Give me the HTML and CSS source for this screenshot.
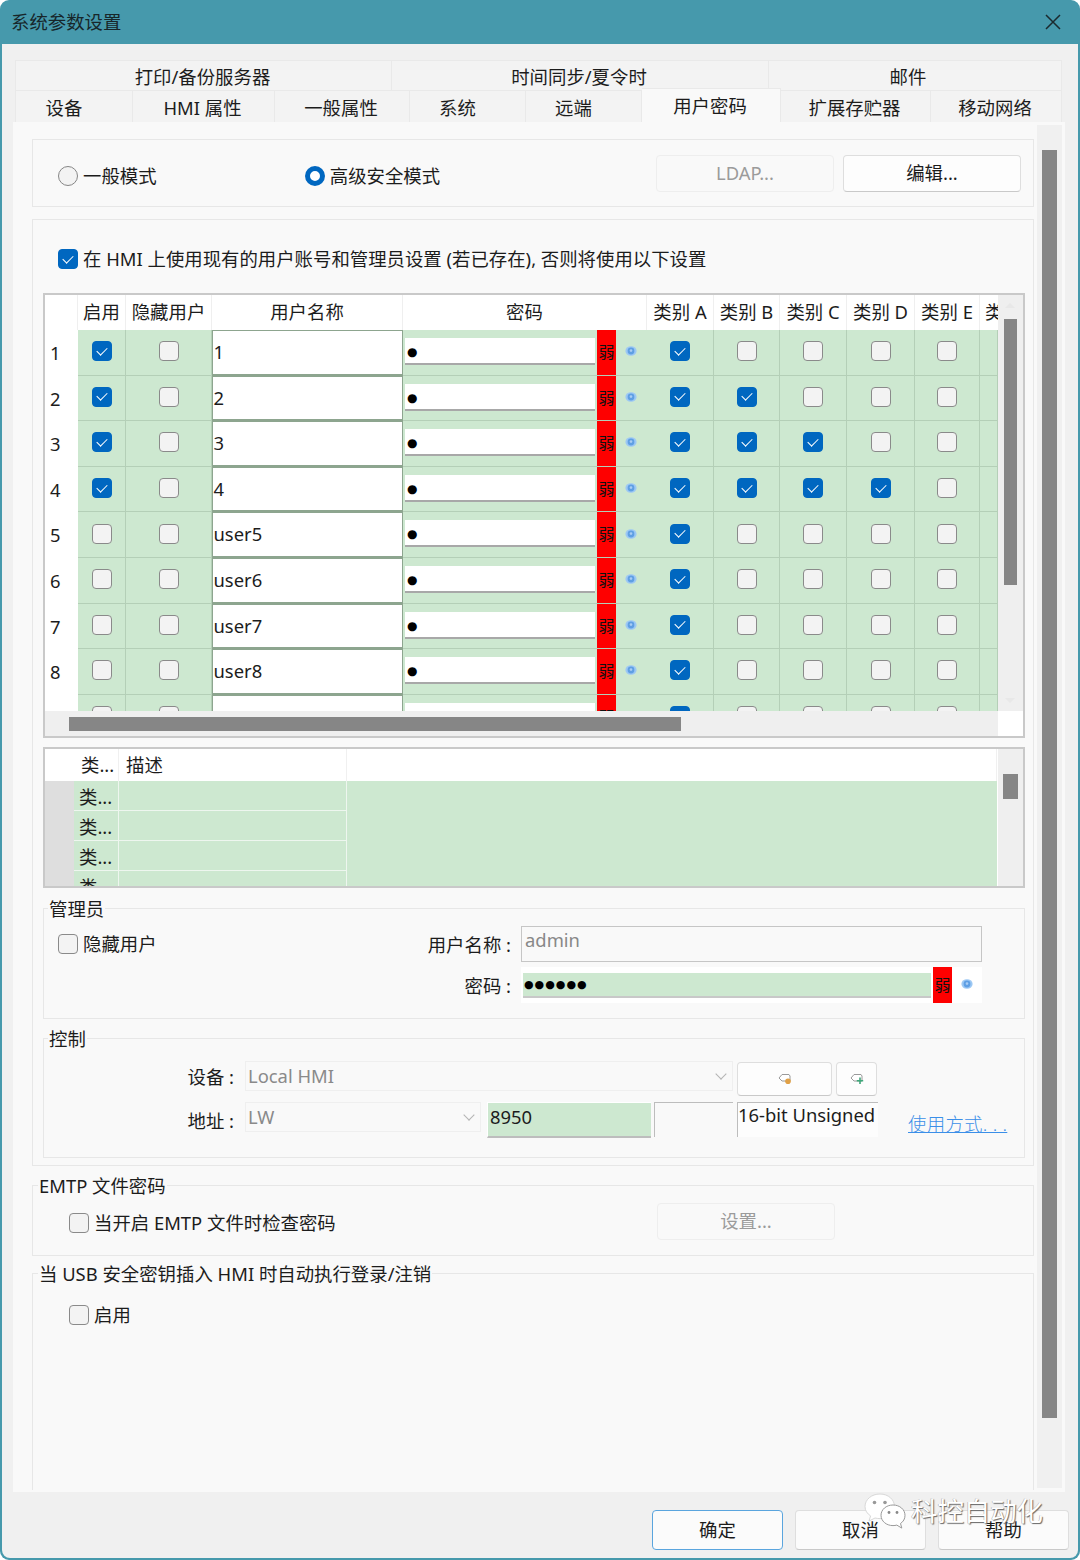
FILE: index.html
```html
<!DOCTYPE html>
<html lang="zh-CN">
<head>
<meta charset="utf-8">
<title>系统参数设置</title>
<link rel="stylesheet" href="styles.css">
</head>
<body>
<svg class="defs" width="0" height="0" aria-hidden="true">
  <symbol id="eye" viewBox="0 0 12 12">
    <ellipse cx="6" cy="6" rx="5.6" ry="4.8" fill="#9cc8f4"/>
    <circle cx="6" cy="6" r="3.4" fill="#5f9fe4"/>
    <circle cx="6" cy="5.6" r="1.3" fill="#a9cdf4"/>
  </symbol>
</svg>
<div class="window">
  <header class="titlebar">
    <span class="title">系统参数设置</span>
    <svg class="close" width="16" height="16" viewBox="0 0 16 16"><path d="M1 1L15 15M15 1L1 15" stroke="#1b2a2e" stroke-width="1.5" fill="none"/></svg>
  </header>
  <div class="client">
    <div class="tabs tabs-top">
      <div class="tab">打印/备份服务器</div>
      <div class="tab">时间同步/夏令时</div>
      <div class="tab tab-mail">邮件</div>
    </div>
    <div class="tabs tabs-bottom">
      <div class="tab tab-left">设备</div>
      <div class="tab">HMI 属性</div>
      <div class="tab">一般属性</div>
      <div class="tab tab-left">系统</div>
      <div class="tab tab-left">远端</div>
      <div class="tab active">用户密码</div>
      <div class="tab">扩展存贮器</div>
      <div class="tab">移动网络</div>
    </div>
    <main class="panel">
      <div class="scroll-area">
        <section class="group mode-group">
          <label class="opt mode-opt"><span class="radio"></span>一般模式</label>
          <label class="opt mode-opt"><span class="radio on"></span>高级安全模式</label>
          <button class="btn wide disabled">LDAP...</button>
          <button class="btn wide">编辑...</button>
        </section>

        <section class="group security-group">
          <label class="opt use-existing"><span class="cb on"></span>在 HMI 上使用现有的用户账号和管理员设置 (若已存在), 否则将使用以下设置</label>

          <div class="users">
            <div class="users-view">
              <div class="users-table">
                <div class="th"></div><div class="th">启用</div><div class="th">隐藏用户</div><div class="th">用户名称</div><div class="th">密码</div><div class="th">类别 A</div><div class="th">类别 B</div><div class="th">类别 C</div><div class="th">类别 D</div><div class="th">类别 E</div><div class="th th-clip">类别 F</div>

                <div class="rowhead">1</div><div class="td"><span class="cb on"></span></div><div class="td"><span class="cb"></span></div><div class="uname">1</div><div class="pw"><span class="pw-in">●</span><span class="weak">弱</span><span class="eye-box"><svg class="eye"><use href="#eye"/></svg></span></div><div class="td"><span class="cb on"></span></div><div class="td"><span class="cb"></span></div><div class="td"><span class="cb"></span></div><div class="td"><span class="cb"></span></div><div class="td"><span class="cb"></span></div><div class="td"></div>

                <div class="rowhead">2</div><div class="td"><span class="cb on"></span></div><div class="td"><span class="cb"></span></div><div class="uname">2</div><div class="pw"><span class="pw-in">●</span><span class="weak">弱</span><span class="eye-box"><svg class="eye"><use href="#eye"/></svg></span></div><div class="td"><span class="cb on"></span></div><div class="td"><span class="cb on"></span></div><div class="td"><span class="cb"></span></div><div class="td"><span class="cb"></span></div><div class="td"><span class="cb"></span></div><div class="td"></div>

                <div class="rowhead">3</div><div class="td"><span class="cb on"></span></div><div class="td"><span class="cb"></span></div><div class="uname">3</div><div class="pw"><span class="pw-in">●</span><span class="weak">弱</span><span class="eye-box"><svg class="eye"><use href="#eye"/></svg></span></div><div class="td"><span class="cb on"></span></div><div class="td"><span class="cb on"></span></div><div class="td"><span class="cb on"></span></div><div class="td"><span class="cb"></span></div><div class="td"><span class="cb"></span></div><div class="td"></div>

                <div class="rowhead">4</div><div class="td"><span class="cb on"></span></div><div class="td"><span class="cb"></span></div><div class="uname">4</div><div class="pw"><span class="pw-in">●</span><span class="weak">弱</span><span class="eye-box"><svg class="eye"><use href="#eye"/></svg></span></div><div class="td"><span class="cb on"></span></div><div class="td"><span class="cb on"></span></div><div class="td"><span class="cb on"></span></div><div class="td"><span class="cb on"></span></div><div class="td"><span class="cb"></span></div><div class="td"></div>

                <div class="rowhead">5</div><div class="td"><span class="cb"></span></div><div class="td"><span class="cb"></span></div><div class="uname">user5</div><div class="pw"><span class="pw-in">●</span><span class="weak">弱</span><span class="eye-box"><svg class="eye"><use href="#eye"/></svg></span></div><div class="td"><span class="cb on"></span></div><div class="td"><span class="cb"></span></div><div class="td"><span class="cb"></span></div><div class="td"><span class="cb"></span></div><div class="td"><span class="cb"></span></div><div class="td"></div>

                <div class="rowhead">6</div><div class="td"><span class="cb"></span></div><div class="td"><span class="cb"></span></div><div class="uname">user6</div><div class="pw"><span class="pw-in">●</span><span class="weak">弱</span><span class="eye-box"><svg class="eye"><use href="#eye"/></svg></span></div><div class="td"><span class="cb on"></span></div><div class="td"><span class="cb"></span></div><div class="td"><span class="cb"></span></div><div class="td"><span class="cb"></span></div><div class="td"><span class="cb"></span></div><div class="td"></div>

                <div class="rowhead">7</div><div class="td"><span class="cb"></span></div><div class="td"><span class="cb"></span></div><div class="uname">user7</div><div class="pw"><span class="pw-in">●</span><span class="weak">弱</span><span class="eye-box"><svg class="eye"><use href="#eye"/></svg></span></div><div class="td"><span class="cb on"></span></div><div class="td"><span class="cb"></span></div><div class="td"><span class="cb"></span></div><div class="td"><span class="cb"></span></div><div class="td"><span class="cb"></span></div><div class="td"></div>

                <div class="rowhead">8</div><div class="td"><span class="cb"></span></div><div class="td"><span class="cb"></span></div><div class="uname">user8</div><div class="pw"><span class="pw-in">●</span><span class="weak">弱</span><span class="eye-box"><svg class="eye"><use href="#eye"/></svg></span></div><div class="td"><span class="cb on"></span></div><div class="td"><span class="cb"></span></div><div class="td"><span class="cb"></span></div><div class="td"><span class="cb"></span></div><div class="td"><span class="cb"></span></div><div class="td"></div>

                <div class="rowhead">9</div><div class="td"><span class="cb"></span></div><div class="td"><span class="cb"></span></div><div class="uname">user9</div><div class="pw"><span class="pw-in">●</span><span class="weak">弱</span><span class="eye-box"><svg class="eye"><use href="#eye"/></svg></span></div><div class="td"><span class="cb on"></span></div><div class="td"><span class="cb"></span></div><div class="td"><span class="cb"></span></div><div class="td"><span class="cb"></span></div><div class="td"><span class="cb"></span></div><div class="td"></div>
              </div>
            </div>
            <div class="vbar"><span class="arrow up"></span><span class="thumb v-thumb"></span><span class="arrow down"></span></div>
            <div class="hbar"><span class="thumb h-thumb"></span></div>
            <div class="corner"></div>
          </div>

          <div class="cats">
            <div class="cats-view">
              <div class="cats-table">
                <div class="ch ch-gut"></div><div class="ch ch-cat">类...</div><div class="ch ch-desc">描述</div><div class="ch"></div>
                <div class="gut"></div><div class="cc">类...</div><div class="cd"></div><div class="ce"></div>
                <div class="gut"></div><div class="cc">类...</div><div class="cd"></div><div class="ce"></div>
                <div class="gut"></div><div class="cc">类...</div><div class="cd"></div><div class="ce"></div>
                <div class="gut"></div><div class="cc">类...</div><div class="cd"></div><div class="ce"></div>
              </div>
            </div>
            <div class="vbar cats-bar"><span class="thumb c-thumb"></span></div>
          </div>

          <fieldset class="group admin">
            <span class="legend">管理员</span>
            <label class="opt admin-hide"><span class="cb"></span>隐藏用户</label>
            <span class="flabel">用户名称 :</span>
            <div class="name-field">admin</div>
            <span class="flabel admin-pass-label">密码 :</span>
            <div class="pass-field"><span class="pass-in">●●●●●●</span><span class="weak">弱</span><span class="eye-box"><svg class="eye"><use href="#eye"/></svg></span></div>
          </fieldset>

          <fieldset class="group control">
            <span class="legend">控制</span>
            <div class="ctl-row ctl-row1">
              <span class="flabel ctl-label">设备 :</span>
              <div class="select sel-device">Local HMI<span class="chev"></span></div>
              <button class="btn icon-btn ib-wide"><svg width="14" height="12" viewBox="0 0 14 12"><path d="M1 5L4 1.5H11L12 3V8H4Z" fill="#fff" stroke="#9a9a9a"/><circle cx="10" cy="8.2" r="2.8" fill="#e0a045"/></svg></button>
              <button class="btn icon-btn ib-small"><svg width="14" height="12" viewBox="0 0 14 12"><path d="M1 5L4 1.5H11L12 3V8H4Z" fill="#fff" stroke="#9a9a9a"/><path d="M10 4.5V11M6.8 7.8H13.2" stroke="#3fa77a" stroke-width="1.6"/></svg></button>
            </div>
            <div class="ctl-row ctl-row2">
              <span class="flabel ctl-label ctl-label2">地址 :</span>
              <div class="select sel-lw">LW<span class="chev"></span></div>
              <div class="addr">8950</div>
              <div class="blank"></div>
              <div class="dtype">16-bit Unsigned</div>
              <a class="howto">使用方式. . .</a>
            </div>
          </fieldset>
        </section>

        <fieldset class="group emtp">
          <span class="legend legend-outer">EMTP 文件密码</span>
          <label class="opt"><span class="cb"></span>当开启 EMTP 文件时检查密码</label>
          <button class="btn wide disabled">设置...</button>
        </fieldset>

        <fieldset class="group usb">
          <span class="legend legend-outer">当 USB 安全密钥插入 HMI 时自动执行登录/注销</span>
          <label class="opt"><span class="cb"></span>启用</label>
        </fieldset>
      </div>
      <div class="panel-bar"><span class="thumb p-thumb"></span></div>
    </main>
    <footer class="actions">
      <button class="btn act primary">确定</button>
      <button class="btn act">取消</button>
      <button class="btn act">帮助</button>
    </footer>
    <div class="watermark">
      <svg class="wx" width="42" height="38" viewBox="0 0 42 38">
        <path d="M16 1C7.500 1 1 6.600 1 13.500c0 4 2.200 7.200 5.600 9.400L5 28l6-3c1.600.4 3.200.6 5 .6 8.500 0 14.500-5.400 14.500-12.100S24.500 1 16 1Z" fill="#fff" stroke="#d8d8d8"/>
        <path d="M29 12c-6.800 0-12 4.600-12 10.300S22.200 32.600 29 32.600c1.400 0 2.600-.2 3.800-.5l5 3-1.300-4.600c2.900-1.900 4.500-4.700 4.500-8.200C41 16.600 35.800 12 29 12Z" fill="#fff" stroke="#9a9a9a"/>
        <circle cx="10.500" cy="9.500" r="1.800" fill="#999"/><circle cx="21" cy="9.500" r="1.800" fill="#999"/>
        <circle cx="25" cy="19.500" r="1.400" fill="#888"/><circle cx="33" cy="19.500" r="1.400" fill="#888"/>
      </svg>
      <span class="wm-text">科控自动化</span>
    </div>
  </div>
</div>
</body>
</html>
```

FILE: styles.css
```css
* { box-sizing: border-box; }
html, body { margin: 0; padding: 0; background: #fff; }
body {
  width: 1080px;
  height: 1560px;
  overflow: hidden;
  font-family: "Noto Sans", "Noto Sans CJK SC", sans-serif;
  font-size: 18.4px;
  line-height: 24px;
  color: #1c1c1c;
}
.defs { position: absolute; }
button { font: inherit; color: inherit; padding: 0; }
fieldset { margin: 0; min-width: 0; }

.window {
  width: 1080px;
  height: 1560px;
  display: flex;
  flex-direction: column;
  background: #4699ac;
  border-radius: 9px;
  overflow: hidden;
}
.titlebar {
  height: 44px;
  flex: none;
  display: flex;
  align-items: center;
  justify-content: space-between;
  padding: 0 19px 0 11px;
  color: #17262a;
}
.client {
  position: relative;
  flex: 1;
  margin: 0 2px 2px;
  background: #f0f0f0;
  border-radius: 0 0 8px 8px;
  padding: 16px 0 0 13px;
  display: flex;
  flex-direction: column;
}
.tabs { display: grid; width: 1047px; }
.tabs-top { grid-template-columns: 377px 377px 293px; height: 30px; }
.tabs-bottom { grid-template-columns: 118px 142px 135px 116px 116px 139px 150px 131px; height: 32px; }
.tab {
  display: flex;
  align-items: center;
  justify-content: center;
  background: #f3f3f3;
  border: 1px solid #e9e9e9;
  border-width: 1px 1px 0 0;
  white-space: nowrap;
  padding: 3px 2px 0 0;
}
.tab:first-child { border-left-width: 1px; }
.tab.tab-left { padding-right: 20px; }
.tab.tab-mail { padding-right: 14px; }
.tab.active {
  background: #f9f9f9;
  margin-top: -2px;
  padding-top: 0;
  position: relative;
  z-index: 1;
}

.panel {
  margin-left: -2px;
  width: 1052px;
  height: 1370px;
  flex: none;
  background: #f9f9f9;
  display: flex;
}
.scroll-area {
  width: 1021px;
  padding: 17px 0 0 19px;
  flex: none;
  display: flex;
  flex-direction: column;
}
.panel-bar {
  margin: 3px 0 4px 3px;
  width: 25px;
  background: #f0f0f0;
  padding: 25px 5px 0;
}
.thumb { display: block; background: #868686; }
.p-thumb { height: 1268px; }

.group {
  width: 1002px;
  border: 1.5px solid #e7e7e7;
  padding: 0;
  position: relative;
  flex: none;
}
.legend {
  position: absolute;
  left: 4px;
  top: -12px;
  background: #f9f9f9;
  padding: 0 1px;
  white-space: nowrap;
}
.legend-outer { left: 5px; }

.opt { display: inline-flex; align-items: center; gap: 5px; white-space: nowrap; }
.radio {
  width: 20px; height: 20px; flex: none;
  border-radius: 50%;
  border: 1.5px solid #868686;
  background: #f3f3f3;
}
.radio.on { border: 5.500px solid #0067c0; background: #fff; }
.cb {
  position: relative;
  display: block;
  width: 20px; height: 20px; flex: none;
  border-radius: 4px;
  border: 1.5px solid #8a8a8a;
  background: #f3f3f3;
}
.cb.on { background: #0067c0; border-color: #0067c0; }
.cb.on::after {
  content: "";
  position: absolute;
  left: 6px; top: 2.500px;
  width: 5px; height: 9px;
  border: solid #fff;
  border-width: 0 1.2px 1.2px 0;
  transform: rotate(45deg);
}

.btn {
  display: flex;
  align-items: center;
  justify-content: center;
  background: #fdfdfd;
  border: 1px solid #dedede;
  border-bottom: 1.5px solid #c9c9c9;
  border-radius: 4px;
  flex: none;
}
.btn.disabled { background: #f9f9f9; color: #9b9b9b; border: 1px solid #eee; }
.wide { width: 178px; height: 37px; padding-bottom: 1px; }

.mode-group {
  height: 68px;
  display: flex;
  align-items: flex-start;
  padding: 15px 12px 0 25px;
  gap: 0;
}
.mode-opt { margin-top: 9px; width: 248px; }
.mode-opt + .mode-opt { width: 353px; }
.mode-group .btn + .btn { margin-left: 9px; }

.security-group {
  height: 947px;
  margin-top: 12px;
  padding: 27px 0 0 10px;
  display: flex;
  flex-direction: column;
}
.use-existing { margin-left: 15px; height: 24px; }

.users {
  margin-top: 22px;
  width: 982px;
  height: 445px;
  border: 2px solid #c9c9c9;
  display: grid;
  grid-template-columns: 953px 25px;
  grid-template-rows: 416px 25px;
  background: #fff;
}
.users-view { overflow: hidden; }
.users-table {
  display: grid;
  grid-template-columns: 33px 48px 86px 191px 244px 67px 66px 67px 68px 65px 18px;
  grid-template-rows: 35px repeat(9, 45.6px);
}
.th {
  display: flex;
  align-items: center;
  justify-content: center;
  background: #fff;
  border-right: 1.5px solid #efefef;
  white-space: nowrap;
  overflow: hidden;
  padding-bottom: 2px;
}
.th-clip { justify-content: flex-start; padding-left: 5px; border-right: 0; }
.rowhead { background: #fff; padding: 11px 0 0 5px; }
.td {
  display: flex;
  align-items: center;
  justify-content: center;
  background: #cde8d0;
  border-right: 1.5px solid #b4cfb7;
  border-bottom: 1.5px solid #b4cfb7;
}
.td .cb { margin-top: -2px; }
.uname {
  background: #fff;
  border: 1.5px solid #8da58f;
  border-bottom-width: 2px;
  padding: 9px 0 0 0.5px;
  line-height: 24px;
  overflow: hidden;
}
.pw {
  display: flex;
  background: #cde8d0;
  border-bottom: 1.5px solid #b4cfb7;
  padding-left: 2px;
  overflow: hidden;
}
.pw-in {
  width: 190px;
  height: 27px;
  margin-top: 8px;
  background: #fff;
  border-bottom: 2px solid #a8a8a8;
  padding-left: 2px;
  font-size: 12px;
  line-height: 28px;
  color: #000;
  font-family: "DejaVu Sans", sans-serif;
}
.weak {
  width: 19px;
  flex: none;
  margin-left: 2px;
  background: #fe0000;
  color: #111;
  font-size: 16px;
  line-height: 44px;
  text-align: center;
}
.eye-box { width: 30px; flex: none; display: flex; align-items: center; justify-content: center; }
.eye { width: 12px; height: 12px; margin-top: -2px; }

.vbar { background: #efefef; padding: 24px 6px 0; position: relative; }
.v-thumb { height: 266px; }
.arrow { position: absolute; left: 7px; width: 0; height: 0; border: 5px solid transparent; }
.arrow.up { top: 3px; border-bottom-color: #e8e8e8; }
.arrow.down { bottom: 3px; border-top-color: #e8e8e8; }
.hbar { background: #efefef; padding: 6px 0 0 24px; }
.h-thumb { width: 612px; height: 14px; }
.corner { background: #fff; }

.cats {
  margin-top: 9px;
  width: 982px;
  height: 141px;
  border: 2px solid #c9c9c9;
  display: grid;
  grid-template-columns: 953px 25px;
  background: #fff;
}
.cats-view { overflow: hidden; height: 137px; }
.cats-table {
  display: grid;
  grid-template-columns: 29px 45px 228px 650px;
  grid-template-rows: 32px repeat(4, 30px);
}
.ch { background: #fff; border-right: 1.5px solid #f0f0f0; display: flex; align-items: center; white-space: nowrap; }
.ch-gut { border-right: 0; }
.ch-cat { padding-left: 7px; }
.ch-desc { padding-left: 7px; }
.gut { background: #dedede; }
.cc { background: #cde8d0; border-right: 1.5px solid #eef6ef; border-bottom: 1.5px solid #eef6ef; padding: 4px 0 0 5px; overflow: hidden; }
.cd { background: #cde8d0; border-right: 1.5px solid #eef6ef; border-bottom: 1.5px solid #eef6ef; }
.ce { background: #cde8d0; }
.cats-bar { padding: 25px 5px 0 5px; }
.c-thumb { height: 25px; }

.admin {
  width: 982px;
  height: 111px;
  margin-top: 20px;
  display: grid;
  grid-template-columns: 1fr auto 461px;
  grid-template-rows: 36px 36px;
  column-gap: 9px;
  row-gap: 5px;
  padding: 17px 42px 0 14px;
}
.admin-hide { align-self: start; margin-top: 6px; }
.flabel { white-space: nowrap; }
.admin > .flabel { align-self: center; justify-self: end; margin: 2px 1px 0 0; }
.admin-pass-label { grid-column: 2; grid-row: 2; }
.name-field {
  border: 1.5px solid #c6c6c6;
  color: #888;
  padding: 1px 0 0 3px;
}
.pass-field {
  grid-column: 3;
  display: flex;
  background: #fff;
}
.pass-in {
  flex: 1;
  margin: 6px 0 5px 2px;
  padding-left: 1px;
  background: #cde8d0;
  border-bottom: 2px solid #c8c8c8;
  font-family: "DejaVu Sans", sans-serif;
  font-size: 11px;
  line-height: 24px;
  letter-spacing: 1px;
  color: #000;
}
.pass-field .weak { line-height: 36px; }
.pass-field .eye-box { width: 30px; }

.control {
  width: 982px;
  height: 120px;
  margin-top: 19px;
  padding: 22px 0 0 0;
}
.ctl-row { display: flex; align-items: flex-start; }
.ctl-row1 { height: 41px; }
.ctl-label { width: 190px; text-align: right; margin-right: 11px; flex: none; margin-top: 4px; }
.ctl-label2 { margin-top: 7px; }
.select {
  position: relative;
  height: 30px;
  border: 1.5px solid #efefef;
  color: #8a8a8a;
  padding: 2px 0 0 2px;
  flex: none;
}
.sel-device { width: 488px; }
.sel-lw { width: 236px; }
.chev {
  position: absolute;
  right: 7px; top: 8px;
  width: 8px; height: 8px;
  border: solid #b4b4b4;
  border-width: 0 1px 1px 0;
  transform: rotate(45deg);
}
.icon-btn { height: 34px; margin-top: 1px; }
.ib-wide { width: 95px; margin-left: 4px; }
.ib-small { width: 41px; margin-left: 4px; }
.addr {
  width: 164px;
  height: 36px;
  margin-left: 6px;
  background: #cde8d0;
  border: solid #fff;
  border-width: 1.5px 0 0 1.5px;
  border-bottom: 2px solid #bdbdbd;
  padding: 2px 0 0 2px;
}
.blank {
  width: 79px;
  height: 35px;
  margin-left: 3px;
  background: #f9f9f9;
  border: solid #bdbdbd;
  border-width: 1.5px 0 0 1.5px;
}
.dtype {
  width: 141px;
  height: 35px;
  margin-left: 4px;
  background: #fdfdfd;
  border: solid #bdbdbd;
  border-width: 1.5px 0 0 1.5px;
  white-space: nowrap;
  overflow: hidden;
  line-height: 24px;
}
.howto {
  margin: 10px 0 0 30px;
  color: #3b8fe8;
  text-decoration: underline;
  white-space: nowrap;
  font-weight: 300;
  letter-spacing: 0.300px;
}

.emtp {
  height: 71px;
  margin-top: 19px;
  padding: 17px 0 0 36px;
  display: flex;
  align-items: flex-start;
}
.emtp .opt { margin-top: 8px; }
.emtp .btn { margin-left: auto; margin-right: 198px; }
.usb {
  height: 217px;
  margin-top: 17px;
  padding: 29px 0 0 36px;
  border-bottom: 0;
}

.actions {
  display: flex;
  gap: 12px;
  margin: 18px 0 0 637px;
}
.act { width: 131px; height: 40px; background: #fbfbfb; }
.primary { border: 1.5px solid #5aa5de; }

.watermark {
  position: absolute;
  left: 862px;
  top: 1449px;
  display: flex;
  align-items: flex-start;
  gap: 5px;
  pointer-events: none;
}
.wm-text {
  font-size: 26.4px;
  line-height: 36px;
  color: #fff;
  text-shadow: 1px 1px 1px #666, -0.5px 0 0 #aaa;
}
```
